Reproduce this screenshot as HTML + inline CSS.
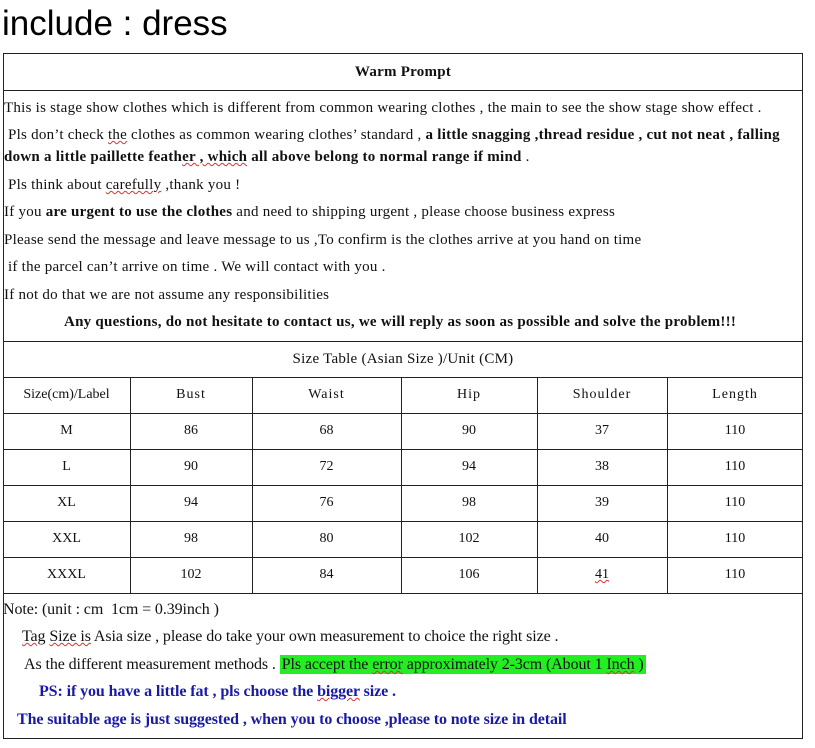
<!DOCTYPE html>
<html><head><style>
body{margin:0;width:815px;height:748px;background:#fff;position:relative;font-family:"Liberation Serif",serif;color:#111;overflow:hidden}
.a{position:absolute;white-space:nowrap}
.t{font-size:15px;letter-spacing:0.25px}
.h{position:absolute;left:3px;width:800px;height:1px;background:#222}
.v{position:absolute;width:1px;background:#222}
.c{position:absolute;font-size:14px;text-align:center;font-family:"Liberation Serif",serif}
.n{font-size:16px;letter-spacing:-0.1px}
.blue{color:#1a1aa8;font-weight:bold}
u{text-decoration:underline wavy #d33 1px}
</style></head><body>
<div class="a" style="left:2px;top:4px;font-family:'Liberation Sans',sans-serif;font-size:35px;color:#000">include : dress</div>
<div class="h" style="top:53px"></div>
<div class="h" style="top:90px"></div>
<div class="h" style="top:341px"></div>
<div class="h" style="top:377px"></div>
<div class="h" style="top:413px"></div>
<div class="h" style="top:449px"></div>
<div class="h" style="top:485px"></div>
<div class="h" style="top:521px"></div>
<div class="h" style="top:557px"></div>
<div class="h" style="top:593px"></div>
<div class="h" style="top:738px"></div>
<div class="v" style="left:3px;top:53px;height:686px"></div>
<div class="v" style="left:802px;top:53px;height:686px"></div>
<div class="v" style="left:130px;top:377px;height:216px"></div>
<div class="v" style="left:252px;top:377px;height:216px"></div>
<div class="v" style="left:401px;top:377px;height:216px"></div>
<div class="v" style="left:537px;top:377px;height:216px"></div>
<div class="v" style="left:667px;top:377px;height:216px"></div>

<div class="a t" style="left:3px;width:800px;text-align:center;top:64px;font-weight:bold">Warm Prompt</div>
<div class="a t" style="left:4px;top:100px">This is stage show clothes which is different from common wearing clothes , the main to see the show stage show effect .</div>
<div class="a t" style="left:4px;top:127px">&nbsp;Pls don’t check <u>the</u> clothes as common wearing clothes’ standard , <b>a little snagging ,thread residue , cut not neat , falling</b></div>
<div class="a t" style="left:4px;top:149px"><b>down a little paillette feath<u>er , which</u> all above belong to normal range if mind</b> .</div>
<div class="a t" style="left:4px;top:177px">&nbsp;Pls think about <u>carefully</u> ,thank you !</div>
<div class="a t" style="left:4px;top:204px">If you <b>are urgent to use the clothes</b> and need to shipping urgent , please choose business express</div>
<div class="a t" style="left:4px;top:232px">Please send the message and leave message to us ,To confirm is the clothes arrive at you hand on time</div>
<div class="a t" style="left:4px;top:259px">&nbsp;if the parcel can’t arrive on time . We will contact with you .</div>
<div class="a t" style="left:4px;top:287px">If not do that we are not assume any responsibilities</div>
<div class="a t" style="left:64px;top:314px;font-weight:bold">Any questions, do not hesitate to contact us, we will reply as soon as possible and solve the problem!!!</div>

<div class="a t" style="left:3px;width:800px;text-align:center;top:351px">Size Table (Asian Size )/Unit (CM)</div>

<div class="c" style="left:3px;width:127px;top:387px">Size(cm)/Label</div>
<div class="c" style="left:130px;width:122px;top:387px;letter-spacing:1px">Bust</div>
<div class="c" style="left:252px;width:149px;top:387px;letter-spacing:1px">Waist</div>
<div class="c" style="left:401px;width:136px;top:387px;letter-spacing:1px">Hip</div>
<div class="c" style="left:537px;width:130px;top:387px;letter-spacing:1px">Shoulder</div>
<div class="c" style="left:667px;width:136px;top:387px;letter-spacing:1px">Length</div>

<div class="c" style="left:3px;width:127px;top:423px">M</div><div class="c" style="left:130px;width:122px;top:423px">86</div><div class="c" style="left:252px;width:149px;top:423px">68</div><div class="c" style="left:401px;width:136px;top:423px">90</div><div class="c" style="left:537px;width:130px;top:423px">37</div><div class="c" style="left:667px;width:136px;top:423px">110</div>
<div class="c" style="left:3px;width:127px;top:459px">L</div><div class="c" style="left:130px;width:122px;top:459px">90</div><div class="c" style="left:252px;width:149px;top:459px">72</div><div class="c" style="left:401px;width:136px;top:459px">94</div><div class="c" style="left:537px;width:130px;top:459px">38</div><div class="c" style="left:667px;width:136px;top:459px">110</div>
<div class="c" style="left:3px;width:127px;top:495px">XL</div><div class="c" style="left:130px;width:122px;top:495px">94</div><div class="c" style="left:252px;width:149px;top:495px">76</div><div class="c" style="left:401px;width:136px;top:495px">98</div><div class="c" style="left:537px;width:130px;top:495px">39</div><div class="c" style="left:667px;width:136px;top:495px">110</div>
<div class="c" style="left:3px;width:127px;top:531px">XXL</div><div class="c" style="left:130px;width:122px;top:531px">98</div><div class="c" style="left:252px;width:149px;top:531px">80</div><div class="c" style="left:401px;width:136px;top:531px">102</div><div class="c" style="left:537px;width:130px;top:531px">40</div><div class="c" style="left:667px;width:136px;top:531px">110</div>
<div class="c" style="left:3px;width:127px;top:567px">XXXL</div><div class="c" style="left:130px;width:122px;top:567px">102</div><div class="c" style="left:252px;width:149px;top:567px">84</div><div class="c" style="left:401px;width:136px;top:567px">106</div><div class="c" style="left:537px;width:130px;top:567px"><u>41</u></div><div class="c" style="left:667px;width:136px;top:567px">110</div>

<div class="a n" style="left:3px;top:601px">Note: (unit : cm &nbsp;1cm = 0.39inch )</div>
<div class="a n" style="left:22px;top:628px"><u>Tag</u> <u>Size is</u> Asia size , please do take your own measurement to choice the right size .</div>
<div class="a n" style="left:24px;top:656px">As the different measurement methods . <span style="background:#22ee22;padding:1px 2px">Pls accept the <u>error</u> approximately 2-3cm (About 1 <u>Inch</u> )</span></div>
<div class="a n blue" style="left:39px;top:683px">PS: if you have a little fat , pls choose the <u>bigger</u> size .</div>
<div class="a n blue" style="left:17px;top:711px">The suitable age is just suggested , when you to choose ,please to note size in detail</div>
</body></html>
